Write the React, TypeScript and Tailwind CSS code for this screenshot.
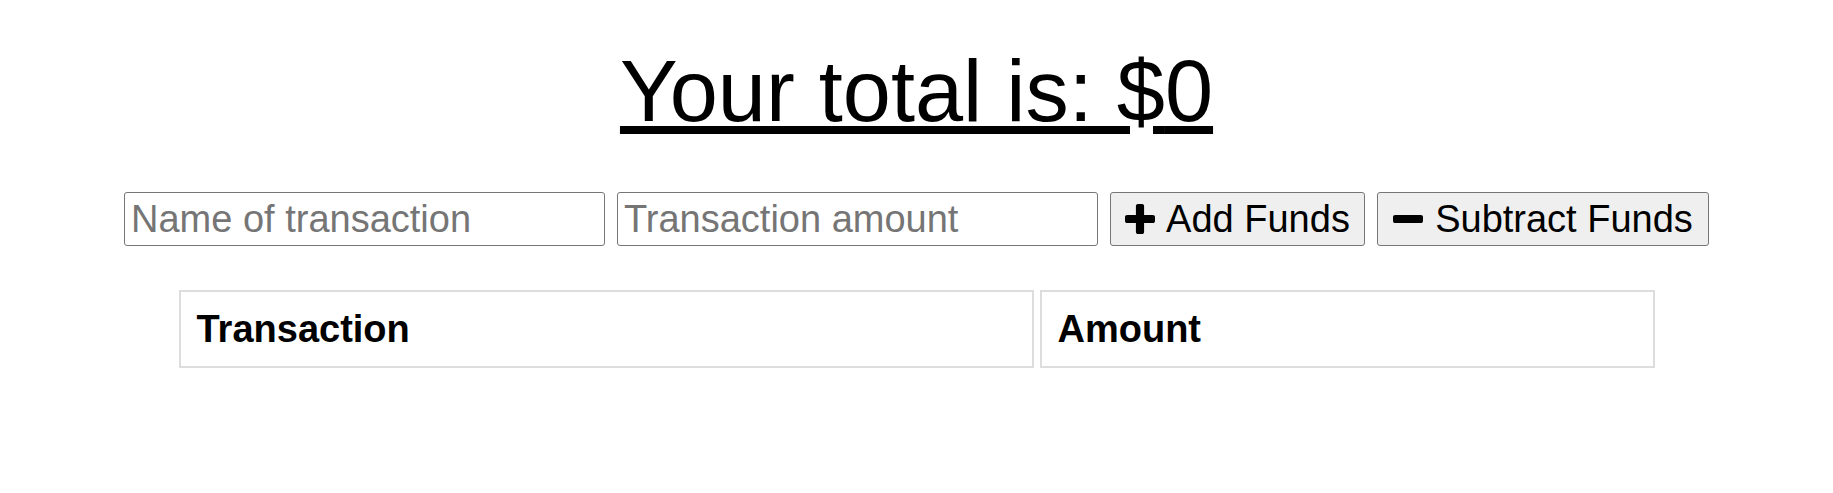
import React, { useState } from "react";

type Entry = { name: string; amount: number };

const PlusIcon = () => (
  <svg width="30" height="30" viewBox="0 192 1408 1408" fill="currentColor">
    <path d="M1408 800v192q0 40-28 68t-68 28h-416v416q0 40-28 68t-68 28h-192q-40 0-68-28t-28-68v-416h-416q-40 0-68-28t-28-68v-192q0-40 28-68t68-28h416v-416q0-40 28-68t68-28h192q40 0 68 28t28 68v416h416q40 0 68 28t28 68z" />
  </svg>
);

const MinusIcon = () => (
  <svg width="30" height="30" viewBox="0 192 1408 1408" fill="currentColor">
    <path d="M1408 800v192q0 40-28 68t-68 28h-1216q-40 0-68-28t-28-68v-192q0-40 28-68t68-28h1216q40 0 68 28t28 68z" />
  </svg>
);

const App = () => {
  const [entries, setEntries] = useState<Entry[]>([]);
  const [name, setName] = useState("");
  const [amount, setAmount] = useState("");

  const total = entries.reduce((sum, e) => sum + e.amount, 0);

  const addEntry = (sign: number) => {
    const value = parseFloat(amount);
    if (!name || isNaN(value)) return;
    setEntries([...entries, { name, amount: sign * value }]);
    setName("");
    setAmount("");
  };

  return (
    <main className="flex flex-col items-center pt-[42px] font-['Liberation_Sans',Arial,sans-serif] text-black bg-white min-h-[493px]">
      <h1 className="text-[86.5px] leading-[98px] underline">Your total is: ${total}</h1>

      <div className="flex items-center gap-3 mt-[52px]">
        <input
          type="text"
          value={name}
          onChange={(e) => setName(e.target.value)}
          placeholder="Name of transaction"
          className="w-[481px] h-[54px] pl-[6px] pr-1 text-[38px] border border-[#767676] rounded-[3px] placeholder:text-[#757575]"
        />
        <input
          type="number"
          value={amount}
          onChange={(e) => setAmount(e.target.value)}
          placeholder="Transaction amount"
          className="w-[481px] h-[54px] pl-[6px] pr-1 text-[38px] border border-[#767676] rounded-[3px] placeholder:text-[#757575]"
        />
        <button
          onClick={() => addEntry(1)}
          className="flex items-center justify-center gap-[11px] w-[255px] h-[54px] text-[38px] bg-[#efefef] border border-[#767676] rounded-[3px]"
        >
          <PlusIcon />
          Add Funds
        </button>
        <button
          onClick={() => addEntry(-1)}
          className="flex items-center justify-center gap-[12px] w-[332px] h-[54px] text-[38px] bg-[#efefef] border border-[#767676] rounded-[3px]"
        >
          <MinusIcon />
          Subtract Funds
        </button>
      </div>

      <table className="mt-[44px] w-[1488px] table-fixed border-separate border-spacing-x-[6px] border-spacing-y-0">
        <thead>
          <tr>
            <th className="w-[855px] border-2 border-[#dddddd] px-4 py-[15px] text-left text-[38px] leading-[44px] font-bold">
              Transaction
            </th>
            <th className="w-[615px] border-2 border-[#dddddd] px-4 py-[15px] text-left text-[38px] leading-[44px] font-bold">
              Amount
            </th>
          </tr>
        </thead>
        <tbody>
          {entries.map((e, i) => (
            <tr key={i}>
              <td className="border-2 border-[#dddddd] px-4 py-2 text-[32px]">{e.name}</td>
              <td className="border-2 border-[#dddddd] px-4 py-2 text-[32px]">${e.amount}</td>
            </tr>
          ))}
        </tbody>
      </table>
    </main>
  );
};

export default App;
